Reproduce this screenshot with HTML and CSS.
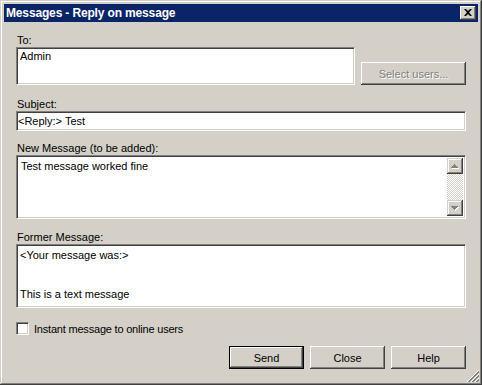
FILE: index.html
```html
<!DOCTYPE html>
<html lang="en">
<head>
  <meta charset="UTF-8" />
  <title>Messages - Reply on message</title>
  <link rel="stylesheet" href="styles.css">
</head>
<body>
  <div class="window">
    <div class="titlebar">
      <span class="title">Messages - Reply on message</span>
      <button type="button" class="close-btn">
        <svg width="8" height="7" viewBox="0 0 8 7"><path d="M0 0h2l2 2 2-2h2L5 3.5 8 7H6L4 5 2 7H0l3-3.5z" fill="#000"/></svg>
      </button>
    </div>

    <form class="dialog-body">
      <label class="field-label" for="to">To:</label>
      <div class="to-row">
        <textarea id="to" class="box to-box">Admin</textarea>
        <button type="button" class="btn btn-select" disabled>Select users...</button>
      </div>

      <label class="field-label label-subject" for="subject">Subject:</label>
      <input id="subject" class="box subject-box" type="text" value="&lt;Reply:&gt; Test">

      <label class="field-label label-new" for="newmsg">New Message (to be added):</label>
      <div class="box new-wrap">
        <textarea id="newmsg" class="new-box">Test message worked fine</textarea>
        <div class="scrollbar">
          <div class="scroll-btn">
            <svg width="8" height="5" viewBox="0 0 8 5"><path d="M4 1h1v1h1v1h1v1h1v1H1V4h1V3h1V2h1z" fill="#fff"/><path d="M3 0h1v1h1v1h1v1h1v1H0V3h1V2h1V1h1z" fill="#808080"/></svg>
          </div>
          <div class="scroll-track"></div>
          <div class="scroll-btn">
            <svg width="8" height="5" viewBox="0 0 8 5"><path d="M1 1h7v1H7v1H6v1H5v1H4V4H3V3H2V2H1z" fill="#fff"/><path d="M0 0h7v1H6v1H5v1H4v1H3V3H2V2H1V1H0z" fill="#808080"/></svg>
          </div>
        </div>
      </div>

      <label class="field-label label-former" for="former">Former Message:</label>
      <textarea id="former" class="box former-box">&lt;Your message was:&gt;


This is a text message</textarea>

      <div class="check-row">
        <input type="checkbox" id="instant" class="check">
        <label for="instant">Instant message to online users</label>
      </div>

      <div class="buttons">
        <button type="button" class="btn btn-default">Send</button>
        <button type="button" class="btn">Close</button>
        <button type="button" class="btn">Help</button>
      </div>
    </form>

    <svg class="grip" width="12" height="12" viewBox="0 0 12 12" shape-rendering="crispEdges">
      <path d="M12 0L0 12M12 4L4 12M12 8L8 12" stroke="#fff" stroke-width="1"/>
      <path d="M12 1L1 12M12 2L2 12M12 5L5 12M12 6L6 12M12 9L9 12M12 10L10 12" stroke="#808080" stroke-width="1"/>
    </svg>
  </div>
</body>
</html>
```

FILE: styles.css
```css
* {
  box-sizing: border-box;
}
body {
  margin: 0;
  background: #d4d0c8;
  font-family: "Liberation Sans", Arial, sans-serif;
  font-size: 11px;
  color: #000;
}
.window {
  position: relative;
  width: 482px;
  height: 385px;
  padding: 4px;
  background: #d4d0c8;
  box-shadow: inset -1px -1px #404040, inset 1px 1px #d4d0c8, inset -2px -2px #808080, inset 2px 2px #fff;
  display: flex;
  flex-direction: column;
}
.titlebar {
  height: 18px;
  background: #0a246a;
  display: flex;
  align-items: center;
  justify-content: space-between;
  padding: 0 2px 0 2px;
}
.title {
  color: #fff;
  font-weight: bold;
  font-size: 12px;
  letter-spacing: -0.15px;
}
.close-btn {
  width: 16px;
  height: 14px;
  padding: 0;
  border: none;
  background: #d4d0c8;
  box-shadow: inset -1px -1px #404040, inset 1px 1px #fff, inset -2px -2px #808080, inset 2px 2px #d4d0c8;
  display: flex;
  align-items: center;
  justify-content: center;
}
.close-btn svg {
  margin-top: -1px;
}
.dialog-body {
  flex: 1;
  margin: 0;
  padding: 11px 12px 0 12px;
  display: flex;
  flex-direction: column;
}
.field-label {
  display: block;
  height: 14px;
  line-height: 14px;
  padding-left: 1px;
}
.box {
  border: 1px solid;
  border-color: #808080 #fff #fff #808080;
  box-shadow: inset 1px 1px #404040, inset -1px -1px #d4d0c8;
  background: #fff;
  font: inherit;
  color: #000;
  outline: none;
  resize: none;
  overflow: hidden;
  margin: 0;
}
.to-row {
  display: flex;
  align-items: flex-end;
  justify-content: space-between;
  height: 38px;
}
.to-box {
  width: 339px;
  height: 38px;
  padding: 2px 3px;
  line-height: 13px;
}
.label-subject {
  margin-top: 12px;
}
.subject-box {
  width: 100%;
  height: 20px;
  padding: 0 1px;
  line-height: 13px;
}
.label-new {
  margin-top: 10px;
}
.new-wrap {
  height: 64px;
  display: flex;
  padding: 2px 2px 2px 2px;
}
.new-box {
  flex: 1;
  border: none;
  padding: 2px 2px;
  font: inherit;
  line-height: 13px;
  resize: none;
  outline: none;
  overflow: hidden;
  background: #fff;
}
.scrollbar {
  width: 16px;
  display: flex;
  flex-direction: column;
}
.scroll-btn {
  width: 16px;
  height: 16px;
  background: #d4d0c8;
  box-shadow: inset -1px -1px #404040, inset 1px 1px #d4d0c8, inset -2px -2px #808080, inset 2px 2px #fff;
  display: flex;
  align-items: center;
  justify-content: center;
}
.scroll-track {
  flex: 1;
  background: repeating-conic-gradient(#fff 0 25%, #d4d0c8 0 50%) 0 0 / 2px 2px;
}
.label-former {
  margin-top: 11px;
}
.former-box {
  width: 100%;
  height: 64px;
  padding: 4px 3px;
  line-height: 13px;
}
.check-row {
  margin-top: 14px;
  height: 13px;
  display: flex;
  align-items: center;
  gap: 5px;
  letter-spacing: -0.2px;
}
.check {
  appearance: none;
  width: 13px;
  height: 13px;
  margin: 0;
  border: 1px solid;
  border-color: #808080 #fff #fff #808080;
  box-shadow: inset 1px 1px #404040, inset -1px -1px #d4d0c8;
  background: #fff;
}
.buttons {
  margin-top: 11px;
  display: flex;
  justify-content: flex-end;
  gap: 6px;
}
.btn {
  width: 75px;
  height: 23px;
  padding: 0;
  border: none;
  background: #d4d0c8;
  font: inherit;
  color: #000;
  box-shadow: inset -1px -1px #404040, inset 1px 1px #fff, inset -2px -2px #808080, inset 2px 2px #d4d0c8;
}
.btn-default {
  border: 1px solid #000;
}
.btn-select {
  width: 105px;
  color: #808080;
  text-shadow: 1px 1px #fff;
}
.grip {
  position: absolute;
  right: 3px;
  bottom: 3px;
}
```
